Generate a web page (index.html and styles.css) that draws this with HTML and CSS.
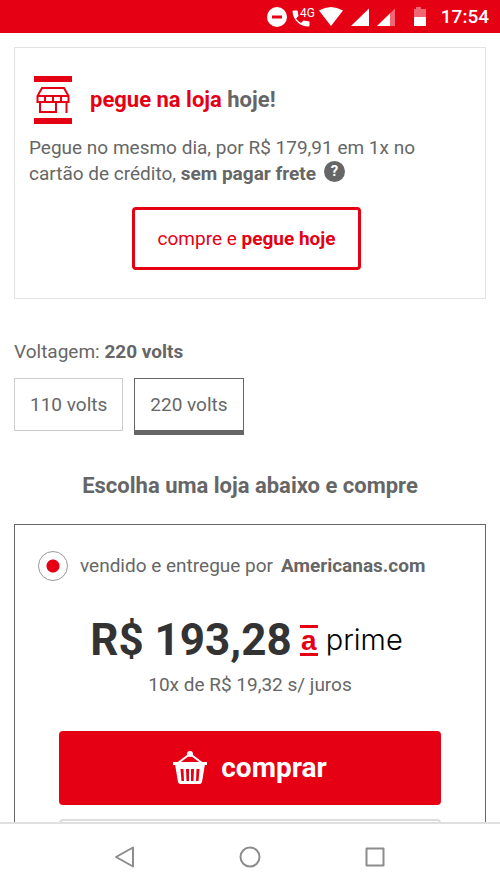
FILE: index.html
```html
<!DOCTYPE html>
<html lang="pt-BR">
<head>
<meta charset="utf-8">
<meta name="viewport" content="width=device-width, initial-scale=1">
<title>Escolha uma loja</title>
<link rel="stylesheet" href="styles.css">
</head>
<body>
<header class="status">
  <svg class="status-icons" width="160" height="24" viewBox="0 0 160 24" aria-hidden="true">
    <circle cx="10" cy="12" r="10" fill="#fff"/>
    <path d="M5 12h10" stroke="#e60014" stroke-width="3"/>
    <path d="M26.500 5.500h4l1 5.500-2.500 2.500a14 14 0 0 0 5 4.500l2.500-2.500 6 1v4q0 1-1 1A16 16 0 0 1 25.500 6.500q0-1 1-1z" fill="#fff"/>
    <text class="network" x="33" y="12" fill="#fff">4G</text>
    <path d="M52 5.500Q64 -1.500 76 5.500L64 21z" fill="#fff"/>
    <path d="M102 3.500V21H84z" fill="#fff"/>
    <path d="M128 3.500V21H110z" fill="#fff" opacity=".4"/>
    <path d="M123 8.500V21H110z" fill="#fff"/>
    <path d="M149 2h5v2h5v8h-12V4h2z" fill="#fff" opacity=".4"/>
    <path d="M147 12h12v9h-12z" fill="#fff"/>
  </svg>
  <time class="clock">17:54</time>
</header>
<main class="page">
  <section class="pickup">
    <h2 class="pickup-title">
      <svg width="38" height="48" viewBox="0 0 38 48" fill="none" stroke="#e60014" stroke-width="2" aria-hidden="true">
        <path d="M0 0h38v6H0zM0 42h38v6H0z" fill="#e60014" stroke="none"/>
        <path d="M8 12h22l4.500 8v6h-31v-6zM3.500 20h31M11 20v6M19 20v6M27 20v6M6 26v10h16V26M32.500 26v11"/>
      </svg>
      <span><span class="red">pegue na loja</span> hoje!</span>
    </h2>
    <div class="pickup-text">
      <p>Pegue no mesmo dia, por R$ 179,91 em 1x no</p>
      <div class="pickup-line"><p>cartão de crédito, <b>sem pagar frete</b></p><button class="help" type="button" aria-label="Ajuda">?</button></div>
    </div>
    <button class="pickup-button" type="button">compre e <b>pegue hoje</b></button>
  </section>
  <section class="voltage">
    <p class="voltage-label">Voltagem: <b>220 volts</b></p>
    <div class="options">
      <button class="option" type="button">110 volts</button>
      <button class="option selected" type="button" aria-pressed="true">220 volts</button>
    </div>
  </section>
  <h2 class="stores-title">Escolha uma loja abaixo e compre</h2>
  <section class="store">
    <label class="seller"><input class="radio" type="radio" name="seller" checked><span>vendido e entregue por</span><b>Americanas.com</b></label>
    <div class="price-row">
      <strong class="price">R$ 193,28</strong>
      <span class="prime-mark">a</span>
      <span class="prime">prime</span>
    </div>
    <p class="installments">10x de R$ 19,32 s/ juros</p>
    <button class="buy" type="button">
      <svg width="34" height="34" viewBox="0 0 34 34" aria-hidden="true">
        <circle cx="17" cy="3" r="3" fill="#fff"/>
        <path d="M5 12L17 3l12 9" fill="none" stroke="#fff" stroke-width="2"/>
        <path fill="#fff" d="M0 11h34v3H0z"/>
        <path fill="#fff" fill-rule="evenodd" d="M2 13h30l-3 18q-.5 2-2.500 2h-19Q5.500 33 5 31zM7.500 18l1 12h2.500l-.5-12zM13 18l.5 12h2.500V18zM18 18v12h2.500l.5-12zM23.500 18l-.5 12h2.500l1-12z"/>
      </svg>
      <span>comprar</span>
    </button>
    <button class="more" type="button" aria-label="Mais opções"></button>
  </section>
</main>
<nav class="navbar">
  <button class="nav-button" type="button" aria-label="Voltar"><svg width="22" height="22" viewBox="0 0 22 22"><path d="M19 1.500v19L2 11z"/></svg></button>
  <button class="nav-button" type="button" aria-label="Início"><svg width="22" height="22" viewBox="0 0 22 22"><circle cx="11" cy="11" r="9.500"/></svg></button>
  <button class="nav-button" type="button" aria-label="Recentes"><svg width="22" height="22" viewBox="0 0 22 22"><path d="M2.500 2.500h17v17h-17z"/></svg></button>
</nav>
</body>
</html>
```
FILE: styles.css
```css
* { box-sizing: border-box; }
body {
  margin: 0;
  height: 100vh;
  display: flex;
  flex-direction: column;
  background: #fff;
  color: #666;
  font: 19px/26px Roboto, "Liberation Sans", sans-serif;
}
h2, p { margin: 0; }
button { font: inherit; color: inherit; cursor: pointer; background: #fff; }
b { font-weight: 700; }
.red { color: #e60014; }
.status {
  flex: none;
  height: 33px;
  padding: 0 11px;
  display: flex;
  align-items: center;
  justify-content: flex-end;
  gap: 14px;
  background: #e60014;
  color: #fff;
}
.network { font-size: 12px; }
.clock { font-weight: 500; }
.page {
  flex: 1;
  min-height: 0;
  overflow: hidden;
  padding: 14px 14px 0;
}
.pickup {
  border: 1px solid #e0e4e8;
  padding: 28px 14px;
  display: flex;
  flex-direction: column;
}
.pickup-title {
  display: flex;
  align-items: center;
  gap: 18px;
  padding-left: 5px;
  font-size: 22px;
  font-weight: 700;
}
.pickup-text { margin-top: 11px; }
.pickup-line { display: flex; align-items: flex-start; gap: 8px; }
.help {
  flex: none;
  width: 21px;
  height: 21px;
  padding: 0;
  border: 0;
  border-radius: 50%;
  background: #666;
  color: #fff;
  font-size: 15px;
  line-height: 21px;
  font-weight: 700;
}
.pickup-button {
  align-self: center;
  margin: 20px 7px 0 0;
  padding: 0 23px;
  height: 63px;
  border: 3px solid #e60014;
  border-radius: 4px;
  color: #e60014;
}
.voltage { margin-top: 40px; }
.options { display: flex; align-items: flex-start; gap: 11px; margin-top: 13px; }
.option {
  height: 53px;
  padding: 0 15px;
  border: 1px solid #ccc;
}
.option.selected { height: 57px; border-color: #666; border-bottom-width: 5px; }
.stores-title {
  margin-top: 38px;
  text-align: center;
  font-size: 22px;
  font-weight: 700;
}
.store {
  margin-top: 25px;
  padding: 26px 44px;
  border: 1px solid #666;
}
.seller {
  display: flex;
  align-items: center;
  gap: 8px;
  margin-left: -21px;
  white-space: nowrap;
}
.radio {
  appearance: none;
  flex: none;
  width: 30px;
  height: 30px;
  margin: 0 4px 0 0;
  border: 1px solid #999;
  border-radius: 50%;
  background: radial-gradient(circle, #e60014 6px, #fff 7px);
}
.price-row {
  display: flex;
  align-items: center;
  justify-content: center;
  gap: 8px;
  margin-top: 32px;
  padding-right: 7px;
  line-height: 54px;
  color: #333;
}
.price { font-size: 44px; }
.prime-mark {
  width: 18px;
  height: 31px;
  border: solid #e60014;
  border-width: 3px 0;
  color: #e60014;
  font: 700 28px/25px "Liberation Sans", sans-serif;
  text-align: center;
}
.prime { color: #000; font: 300 29px/54px Inter, "Liberation Sans", sans-serif; }
.installments { margin-top: 5px; text-align: center; }
.buy {
  width: 100%;
  height: 74px;
  margin-top: 33px;
  display: flex;
  align-items: center;
  justify-content: center;
  gap: 14px;
  border: 0;
  border-radius: 4px;
  background: #e60014;
  color: #fff;
  font-size: 28px;
  font-weight: 700;
}
.more {
  display: block;
  width: 100%;
  height: 64px;
  margin-top: 14px;
  border: 2px solid #ddd;
  border-radius: 4px;
}
.navbar {
  flex: none;
  height: 67px;
  padding: 0 62px;
  display: flex;
  align-items: center;
  border-top: 2px solid #e0e0e0;
}
.nav-button { flex: 1; display: flex; justify-content: center; padding: 8px; border: 0; }
.nav-button svg { fill: none; stroke: #8c8c8c; stroke-width: 2; stroke-linejoin: round; }
```
